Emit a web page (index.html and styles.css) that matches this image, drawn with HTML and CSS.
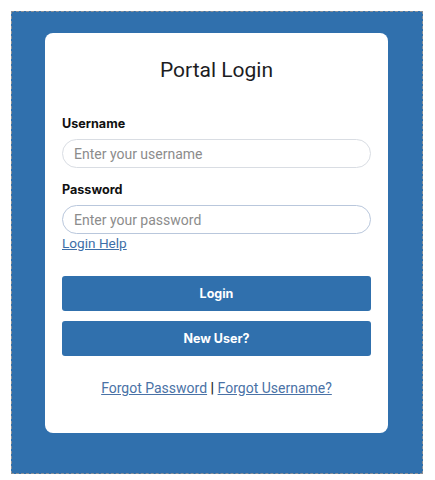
FILE: index.html
```html
<!DOCTYPE html>
<html lang="en">
<head>
    <meta charset="UTF-8">
    <meta name="viewport" content="width=device-width, initial-scale=1.0">
    <title>Portal Login</title>
    <link rel="stylesheet" href="styles.css">
</head>
<body>
<div class="frame">
    <!-- Login card -->
    <div class="card">
        <h2 class="title">Portal Login</h2>

        <label class="field-label" for="username">Username</label>
        <input type="text" id="username" class="field" placeholder="Enter your username">

        <label class="field-label" for="password">Password</label>
        <input type="password" id="password" class="field field-focus" placeholder="Enter your password">
        <a href="#" class="help-link">Login Help</a>

        <button class="btn btn-login">Login</button>
        <button class="btn btn-new">New User?</button>

        <div class="forgot">
            <a href="#">Forgot Password</a> <span class="sep">|</span> <a href="#">Forgot Username?</a>
        </div>
    </div>
</div>
</body>
</html>
```

FILE: styles.css
```css
body {
    margin: 0;
    padding: 11px;
    background-color: #fff;
    font-family: Roboto, "Liberation Sans", Arial, sans-serif;
}

.frame {
    width: 412px;
    height: 463px;
    box-sizing: border-box;
    border: 1px dashed #8a8f96;
    background-color: #3070ad;
    padding: 21px 0 0 33px;
}

.card {
    width: 343px;
    box-sizing: border-box;
    background: #fff;
    border-radius: 8px;
    padding: 25px 17px 37px;
    display: flex;
    flex-direction: column;
}

.title {
    margin: 0 0 34px;
    font-size: 21px;
    line-height: 24px;
    font-weight: 400;
    color: #1d1d1f;
    text-align: center;
}

.field-label {
    font-family: Inter, Roboto, sans-serif;
    font-size: 12.6px;
    line-height: 16px;
    font-weight: 700;
    color: #111;
    margin-bottom: 7px;
}

.field {
    height: 29px;
    box-sizing: border-box;
    border: 1px solid #d9dde3;
    border-radius: 15px;
    padding: 0 11px;
    font-family: Roboto, sans-serif;
    font-size: 14px;
    color: #333;
    margin-bottom: 14px;
    outline: none;
}

.field::placeholder {
    color: #8c8c8c;
}

.field-focus {
    border-color: #b9c7dc;
    margin-bottom: 2px;
}

.help-link {
    font-size: 13.6px;
    line-height: 14px;
    color: #3d6ea8;
    margin-bottom: 26px;
    align-self: flex-start;
}

.btn {
    height: 35px;
    border: none;
    border-radius: 3px;
    background-color: #3070ad;
    color: #fff;
    font-family: Inter, Roboto, sans-serif;
    font-size: 12.5px;
    font-weight: 700;
    cursor: pointer;
}

.btn-login {
    margin-bottom: 10px;
}

.forgot {
    margin-top: 24px;
    text-align: center;
    font-size: 14px;
    line-height: 16px;
    color: #333;
}

.forgot a {
    color: #4a72a6;
}

.forgot .sep {
    color: #222;
    font-weight: 700;
}
```
